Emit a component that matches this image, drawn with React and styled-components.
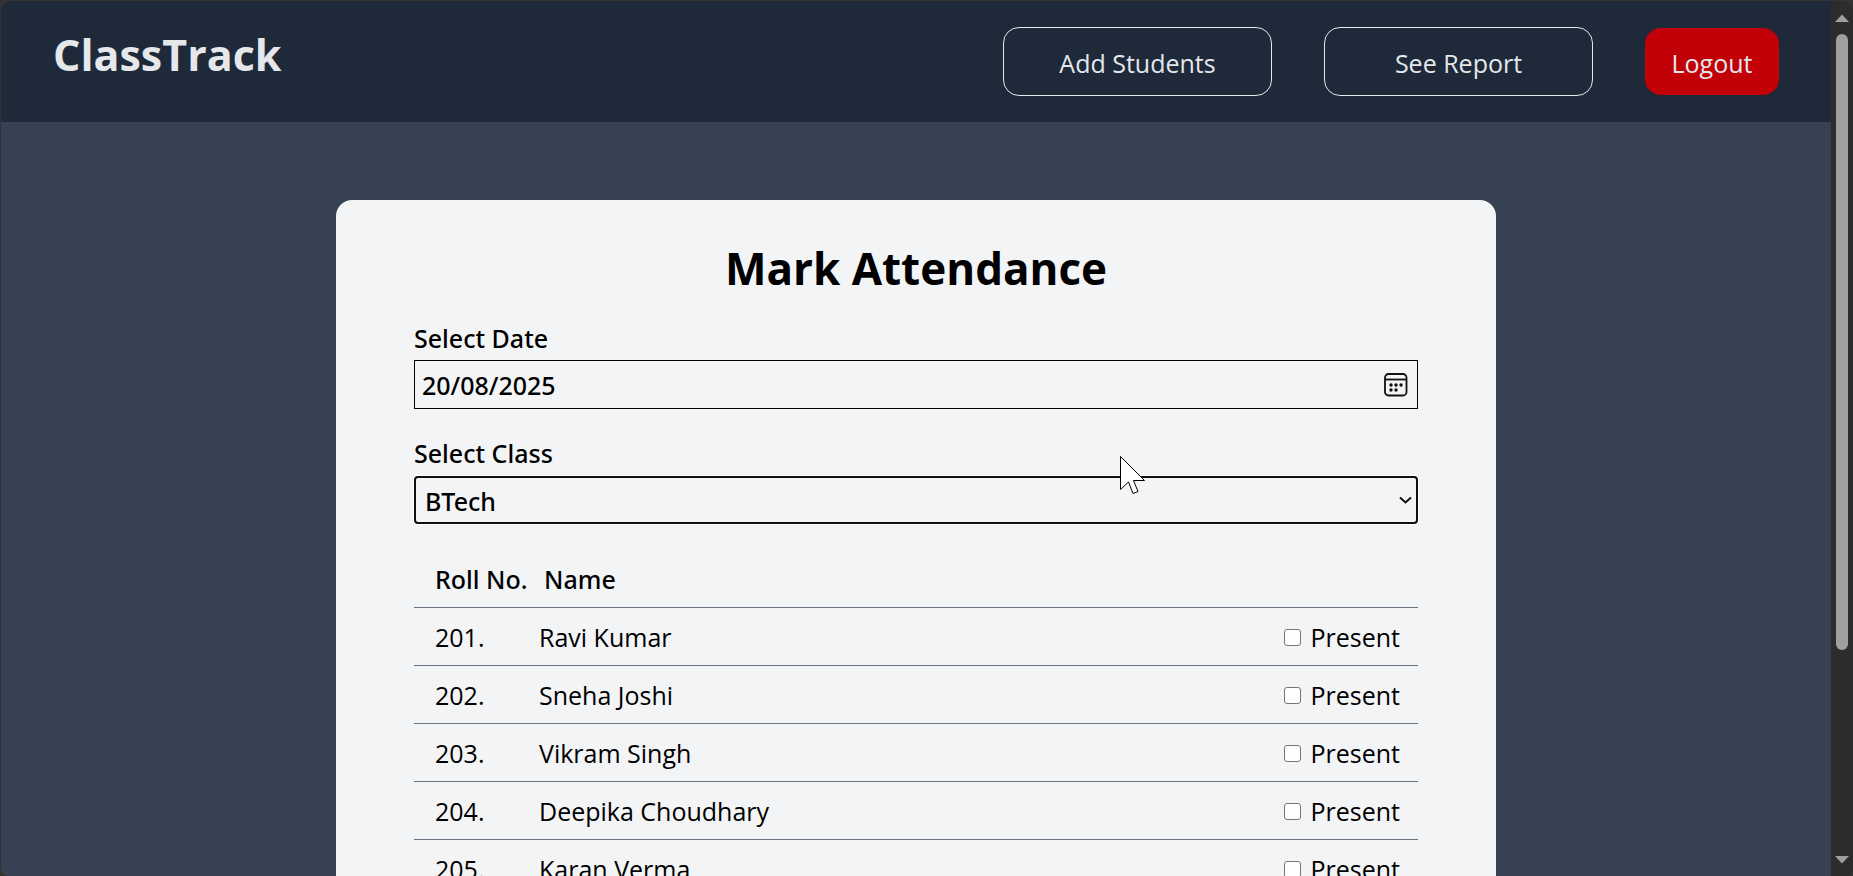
import React from "react";
import styled, { createGlobalStyle } from "styled-components";

const GlobalStyle = createGlobalStyle`
  * { box-sizing: border-box; }
  body {
    margin: 0;
    background: #333333;
    color: #000000;
    font-family: "Segoe UI", "Open Sans", "Noto Sans", sans-serif;
    font-size: 25px;
    line-height: 36px;
  }
  button, input, select { font: inherit; color: inherit; margin: 0; }
`;

const mediumFamily = '"Segoe UI", "Noto Sans", sans-serif';

const Frame = styled.div`
  display: flex;
  height: 100vh;
  padding: 1px 0 0 1px;
  background: #333333;
`;

const Page = styled.div`
  flex: 1;
  min-width: 0;
  overflow-y: auto;
  scrollbar-width: none;
  border-top-left-radius: 11px;
  border-bottom-left-radius: 8px;
  background: #364153;
`;

const Header = styled.header`
  display: flex;
  align-items: flex-start;
  justify-content: space-between;
  padding: 26px 52px;
  background: #1e2939;
  color: #e5e7eb;
`;

const Brand = styled.h1`
  margin: 0;
  font-size: 43px;
  line-height: 56px;
  font-weight: 700;
`;

const Nav = styled.nav`
  display: flex;
  align-items: center;
  gap: 52px;
`;

const NavButton = styled.button`
  min-width: ${(p) => (p.$danger ? "134px" : "269px")};
  height: ${(p) => (p.$danger ? "67px" : "69px")};
  padding: 2px 24px 0;
  border: ${(p) => (p.$danger ? "none" : "1px solid #e5e7eb")};
  border-radius: 16px;
  background: ${(p) => (p.$danger ? "#c10007" : "transparent")};
  cursor: pointer;
`;

const Main = styled.main`
  padding: 78px 52px;
`;

const Card = styled.section`
  max-width: 1160px;
  margin: 0 auto;
  padding: 40px 78px;
  border-radius: 16px;
  background: #f3f4f6;
`;

const Title = styled.h2`
  margin: 0 0 24px;
  font-size: 44px;
  line-height: 56px;
  font-weight: 700;
  text-align: center;
`;

const Form = styled.form`
  display: flex;
  flex-direction: column;
  gap: 26px;
`;

const Field = styled.div`
  display: flex;
  flex-direction: column;
  gap: 4px;
  font-family: ${mediumFamily};
  font-weight: 500;
`;

const DateBox = styled.div`
  display: flex;
  align-items: center;
  height: 49px;
  padding: 0 9px 0 7px;
  border: 1px solid #000000;
`;

const DateInput = styled.input`
  flex: 1;
  min-width: 0;
  padding: 0;
  border: none;
  outline: none;
  background: transparent;
`;

const IconButton = styled.button`
  display: flex;
  padding: 0;
  border: none;
  background: transparent;
  cursor: pointer;
`;

const SelectBox = styled.div`
  position: relative;
  padding-top: 1px;
`;

const Select = styled.select`
  display: block;
  width: 100%;
  height: 48px;
  padding: 2px 36px 0 9px;
  border: 2px solid #101010;
  border-radius: 4px;
  outline: none;
  box-shadow: 0 0 0 1px #ffffff;
  appearance: none;
  background: #f3f4f6;
`;

const Chevron = styled.svg`
  position: absolute;
  right: 6px;
  top: 21px;
  pointer-events: none;
`;

const Pointer = styled.svg`
  position: absolute;
  right: 272px;
  top: -19px;
  pointer-events: none;
`;

const Table = styled.table`
  width: 100%;
  border-spacing: 0;
`;

const Cell = styled.td`
  width: ${(p) => p.$width || "auto"};
  height: 58px;
  padding: 0 18px 0 ${(p) => p.$indent || "0"};
  border-bottom: 1px solid #6a7282;
  text-align: left;
  white-space: nowrap;
`;

const HeadCell = styled(Cell)`
  padding-right: 0;
  font-family: ${mediumFamily};
  font-weight: 500;
`;

const PresentLabel = styled.label`
  display: flex;
  align-items: center;
  justify-content: flex-end;
  gap: 10px;
`;

const Checkbox = styled.input`
  appearance: none;
  width: 17px;
  height: 17px;
  margin-top: 2px;
  border: 1px solid #767676;
  border-radius: 3px;
  background: #ffffff;
  &:checked { background: #0075ff; }
`;

const ScrollBar = styled.div`
  display: flex;
  flex-direction: column;
  align-items: center;
  width: 22px;
  padding: 13px 0 12px;
  border-top-right-radius: 11px;
  border-bottom-right-radius: 8px;
  background: #2c2c2c;
`;

const Track = styled.div`
  flex: 1;
  width: 12px;
  margin: 12px 0;
`;

const Thumb = styled.div`
  height: 76%;
  border-radius: 6px;
  background: #9f9f9f;
`;

const students = [
  { roll: 201, name: "Ravi Kumar" },
  { roll: 202, name: "Sneha Joshi" },
  { roll: 203, name: "Vikram Singh" },
  { roll: 204, name: "Deepika Choudhary" },
  { roll: 205, name: "Karan Verma" },
];

function CalendarIcon() {
  return (
    <svg width="24" height="24" viewBox="0 0 24 24" fill="none" stroke="#101010">
      <rect x="1" y="1" width="21.5" height="21.5" rx="3.5" strokeWidth="1.8" />
      <path d="M1 6.5h21.5" strokeWidth="1.8" />
      <g fill="#101010" stroke="none">
        <circle cx="7" cy="12" r="1.7" />
        <circle cx="12" cy="12" r="1.7" />
        <circle cx="17" cy="12" r="1.7" />
        <circle cx="7" cy="17" r="1.7" />
        <circle cx="12" cy="17" r="1.7" />
      </g>
    </svg>
  );
}

function StudentRow({ roll, name }) {
  return (
    <tr>
      <Cell $indent="21px">{roll}.</Cell>
      <Cell>{name}</Cell>
      <Cell>
        <PresentLabel>
          <Checkbox type="checkbox" />
          Present
        </PresentLabel>
      </Cell>
    </tr>
  );
}

export default function App() {
  return (
    <>
      <GlobalStyle />
      <Frame>
        <Page>
          <Header>
            <Brand>ClassTrack</Brand>
            <Nav>
              <NavButton type="button">Add Students</NavButton>
              <NavButton type="button">See Report</NavButton>
              <NavButton type="button" $danger>Logout</NavButton>
            </Nav>
          </Header>
          <Main>
            <Card>
              <Title>Mark Attendance</Title>
              <Form>
                <Field>
                  <label htmlFor="date">Select Date</label>
                  <DateBox>
                    <DateInput id="date" type="text" defaultValue="20/08/2025" />
                    <IconButton type="button" aria-label="Open calendar">
                      <CalendarIcon />
                    </IconButton>
                  </DateBox>
                </Field>
                <Field>
                  <label htmlFor="class">Select Class</label>
                  <SelectBox>
                    <Select id="class" defaultValue="BTech">
                      <option>BTech</option>
                    </Select>
                    <Chevron width="13" height="9" viewBox="0 0 13 9" fill="none" stroke="#101010" strokeWidth="2">
                      <path d="M1 1.5l5.5 5 5.5-5" />
                    </Chevron>
                    <Pointer width="26" height="39" viewBox="0 0 26 39" fill="#ffffff" stroke="#000000">
                      <path d="M.5.5v33l8-7.5 4.500 11.500 5-2-4.500-11h11z" />
                    </Pointer>
                  </SelectBox>
                </Field>
                <Table>
                  <thead>
                    <tr>
                      <HeadCell as="th" scope="col" $width="125px" $indent="21px">Roll No.</HeadCell>
                      <HeadCell as="th" scope="col" $indent="5px">Name</HeadCell>
                      <HeadCell />
                    </tr>
                  </thead>
                  <tbody>
                    {students.map((s) => (
                      <StudentRow key={s.roll} {...s} />
                    ))}
                  </tbody>
                </Table>
              </Form>
            </Card>
          </Main>
        </Page>
        <ScrollBar aria-hidden="true">
          <svg width="14" height="8" viewBox="0 0 14 8" fill="#9f9f9f"><path d="M7 .5L14 8H0z" /></svg>
          <Track><Thumb /></Track>
          <svg width="14" height="8" viewBox="0 0 14 8" fill="#9f9f9f"><path d="M7 7.500L14 0H0z" /></svg>
        </ScrollBar>
      </Frame>
    </>
  );
}
